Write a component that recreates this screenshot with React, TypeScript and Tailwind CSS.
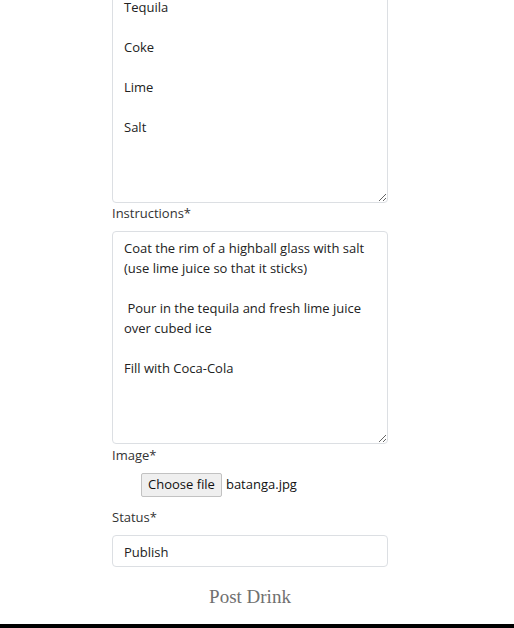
import React from 'react'

const labelCls = 'block text-[13px] leading-[20px] text-[#333]'
const fieldCls =
  'block w-full rounded-[4px] border border-[#dcdfe3] bg-white px-[11px] py-[6px] text-[13px] leading-[20px] text-[#222] focus:outline-none'

const ingredients = 'Tequila\n\nCoke\n\nLime\n\nSalt'
const instructions =
  'Coat the rim of a highball glass with salt (use lime juice so that it sticks)\n\n Pour in the tequila and fresh lime juice over cubed ice\n\nFill with Coca-Cola'

const App: React.FC = () => {
  return (
    <div
      className="flex h-[628px] w-[514px] flex-col justify-end overflow-hidden bg-white"
      style={{ fontFamily: '"Open Sans", "Noto Sans", sans-serif' }}
    >
      <form className="ml-[112px] w-[276px] shrink-0" onSubmit={(e) => e.preventDefault()}>
        <label className={labelCls}>Ingredients*</label>
        <textarea
          className={`${fieldCls} mt-[8px] h-[213px]`}
          style={{ fontFamily: '"Open Sans", "Noto Sans", sans-serif' }}
          defaultValue={ingredients}
        />

        <label className={labelCls}>Instructions*</label>
        <textarea
          className={`${fieldCls} mt-[8px] h-[213px]`}
          style={{ fontFamily: '"Open Sans", "Noto Sans", sans-serif' }}
          defaultValue={instructions}
        />

        <label className={`${labelCls} mt-px`}>Image*</label>
        <div className="ml-[29px] mt-[8px] flex h-[24px] items-center">
          <span className="flex h-[24px] items-center rounded-[2px] border border-[#c2c2c2] bg-[#efefef] px-[6px] text-[13px] text-[#111]">
            Choose file
          </span>
          <span className="ml-[4px] text-[13px] text-[#111]">batanga.jpg</span>
        </div>

        <label className={`${labelCls} mt-[10px]`}>Status*</label>
        <div className={`${fieldCls} mt-[8px] h-[32px]`}>Publish</div>

        <div className="mt-[18px] text-center">
          <button
            type="submit"
            className="text-[19px] leading-[22px] text-[#707070]"
            style={{ fontFamily: '"Liberation Serif", serif' }}
          >
            Post Drink
          </button>
        </div>
      </form>
      <div className="mt-[15px] h-[4px] w-full shrink-0 bg-black" />
    </div>
  )
}

export default App
